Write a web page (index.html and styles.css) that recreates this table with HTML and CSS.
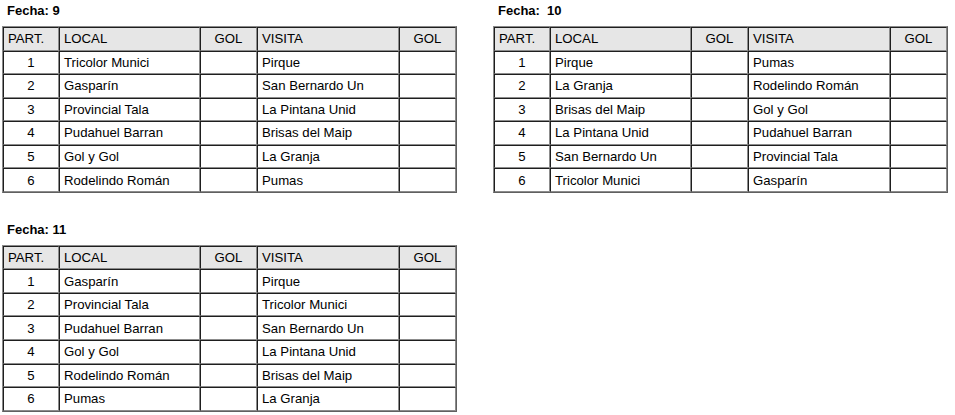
FILE: index.html
```html
<!DOCTYPE html>
<html lang="es">
<head>
<meta charset="utf-8">
<link rel="stylesheet" href="styles.css">
</head>
<body>
<div class="grid">
  <section class="fecha">
    <div class="title">Fecha: 9</div>
    <table>
      <colgroup><col class="c-part"><col class="c-team"><col class="c-gol"><col class="c-team2"><col class="c-gol2"></colgroup>
      <tr class="head"><td>PART.</td><td>LOCAL</td><td class="ctr">GOL</td><td>VISITA</td><td class="ctr">GOL</td></tr>
      <tr><td class="ctr">1</td><td>Tricolor Munici</td><td></td><td>Pirque</td><td></td></tr>
      <tr><td class="ctr">2</td><td>Gasparín</td><td></td><td>San Bernardo Un</td><td></td></tr>
      <tr><td class="ctr">3</td><td>Provincial Tala</td><td></td><td>La Pintana Unid</td><td></td></tr>
      <tr><td class="ctr">4</td><td>Pudahuel Barran</td><td></td><td>Brisas del Maip</td><td></td></tr>
      <tr><td class="ctr">5</td><td>Gol y Gol</td><td></td><td>La Granja</td><td></td></tr>
      <tr><td class="ctr">6</td><td>Rodelindo Román</td><td></td><td>Pumas</td><td></td></tr>
    </table>
  </section>
  <section class="fecha">
    <div class="title">Fecha:&nbsp; 10</div>
    <table>
      <colgroup><col class="c-part"><col class="c-team"><col class="c-gol"><col class="c-team2"><col class="c-gol2"></colgroup>
      <tr class="head"><td>PART.</td><td>LOCAL</td><td class="ctr">GOL</td><td>VISITA</td><td class="ctr">GOL</td></tr>
      <tr><td class="ctr">1</td><td>Pirque</td><td></td><td>Pumas</td><td></td></tr>
      <tr><td class="ctr">2</td><td>La Granja</td><td></td><td>Rodelindo Román</td><td></td></tr>
      <tr><td class="ctr">3</td><td>Brisas del Maip</td><td></td><td>Gol y Gol</td><td></td></tr>
      <tr><td class="ctr">4</td><td>La Pintana Unid</td><td></td><td>Pudahuel Barran</td><td></td></tr>
      <tr><td class="ctr">5</td><td>San Bernardo Un</td><td></td><td>Provincial Tala</td><td></td></tr>
      <tr><td class="ctr">6</td><td>Tricolor Munici</td><td></td><td>Gasparín</td><td></td></tr>
    </table>
  </section>
  <section class="fecha">
    <div class="title">Fecha: 11</div>
    <table>
      <colgroup><col class="c-part"><col class="c-team"><col class="c-gol"><col class="c-team2"><col class="c-gol2"></colgroup>
      <tr class="head"><td>PART.</td><td>LOCAL</td><td class="ctr">GOL</td><td>VISITA</td><td class="ctr">GOL</td></tr>
      <tr><td class="ctr">1</td><td>Gasparín</td><td></td><td>Pirque</td><td></td></tr>
      <tr><td class="ctr">2</td><td>Provincial Tala</td><td></td><td>Tricolor Munici</td><td></td></tr>
      <tr><td class="ctr">3</td><td>Pudahuel Barran</td><td></td><td>San Bernardo Un</td><td></td></tr>
      <tr><td class="ctr">4</td><td>Gol y Gol</td><td></td><td>La Pintana Unid</td><td></td></tr>
      <tr><td class="ctr">5</td><td>Rodelindo Román</td><td></td><td>Brisas del Maip</td><td></td></tr>
      <tr><td class="ctr">6</td><td>Pumas</td><td></td><td>La Granja</td><td></td></tr>
    </table>
  </section>
</div>
</body>
</html>
```
FILE: styles.css
```css
html, body {
  margin: 0;
  padding: 0;
  background: #ffffff;
}
body {
  font-family: "Liberation Sans", Arial, sans-serif;
  font-size: 13px;
  color: #000;
}
.grid {
  display: grid;
  grid-template-columns: 455px 455px;
  column-gap: 36px;
  row-gap: 26px;
  padding: 0 0 0 2px;
}
.title {
  font-weight: bold;
  font-size: 13px;
  line-height: 16px;
  padding: 3px 0 0 5px;
  height: 26px;
  box-sizing: border-box;
}
table {
  width: 455px;
  box-sizing: border-box;
  table-layout: fixed;
  border-collapse: separate;
  border-spacing: 0;
  border: 1px solid;
  border-color: #8a8a8a #606060 #606060 #8a8a8a;
}
.c-part { width: 56px; }
.c-team { width: 141px; }
.c-gol { width: 57px; }
.c-team2 { width: 142px; }
.c-gol2 { width: 57px; }
td {
  border: 1px solid;
  border-color: #1e1e1e #8c8c8c #8c8c8c #1e1e1e;
  padding: 0 0 0 4px;
  height: 21.55px;
  line-height: 15px;
  font-size: 13.2px;
  white-space: nowrap;
  overflow: hidden;
}
td.ctr {
  text-align: center;
  padding: 0;
}
.head td {
  background: #e6e6e6;
}
```
